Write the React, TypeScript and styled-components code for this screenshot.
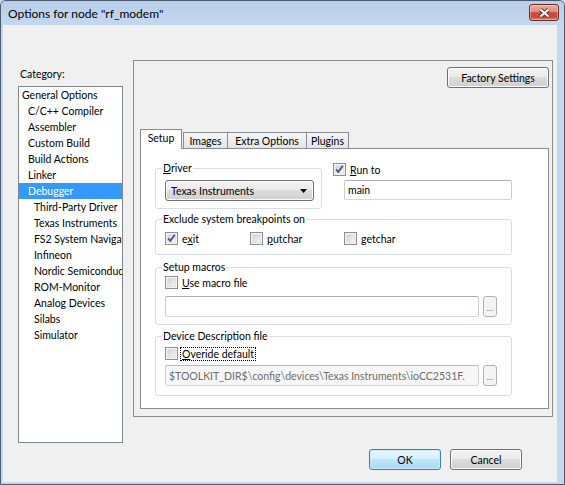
import React from "react";
import styled, { createGlobalStyle, css } from "styled-components";

const FONT = `Lato, "Noto Sans", sans-serif`;

const GlobalStyle = createGlobalStyle`
  html, body {
    margin: 0;
    padding: 0;
  }
  body {
    width: 565px;
    height: 485px;
    overflow: hidden;
    background: #c3d7ef;
    font-family: ${FONT};
    font-size: 10.5px;
    color: #000;
  }
`;

const Window = styled.div`
  box-sizing: border-box;
  width: 565px;
  height: 485px;
  display: flex;
  flex-direction: column;
  border: 1px solid #4b5a70;
  border-radius: 6px 6px 0 0;
  background: #c3d7ef;
  overflow: hidden;
`;

const TitleBar = styled.div`
  flex: none;
  height: 24px;
  display: flex;
  align-items: center;
  justify-content: space-between;
  padding: 0 5px 0 7px;
  background: linear-gradient(#b7cee9, #c4d9f0);
`;

const TitleText = styled.span`
  font-size: 12px;
  color: #000;
`;

const CloseButton = styled.div`
  box-sizing: border-box;
  width: 30px;
  height: 17px;
  margin-top: -1px;
  border: 1px solid #6a2c21;
  border-radius: 3px;
  background: linear-gradient(
    #e9ab9b 0%,
    #dd8f7e 45%,
    #c8533e 50%,
    #c44a34 78%,
    #d7836c 100%
  );
  box-shadow: inset 0 0 0 1px rgba(255, 255, 255, 0.35);
  display: flex;
  align-items: center;
  justify-content: center;
`;

const Client = styled.div`
  flex: 1;
  margin: 0 7px 2px 2px;
  background: #f0f0f0;
  display: flex;
  flex-direction: column;
`;

const Body = styled.div`
  display: flex;
  align-items: flex-start;
  gap: 10px;
  padding: 35px 0 0 15px;
`;

const LeftColumn = styled.div`
  width: 105px;
  padding-top: 6px;
  display: flex;
  flex-direction: column;
`;

const CategoryLabel = styled.div`
  line-height: 16px;
  margin-bottom: 4px;
  padding-left: 2px;
`;

const ListBox = styled.div`
  box-sizing: border-box;
  height: 357px;
  border: 1px solid #828790;
  background: #fff;
  overflow: hidden;
`;

const ListItem = styled.div<{ $level: number; $selected?: boolean }>`
  height: 16px;
  line-height: 16px;
  padding-left: ${(p) => 3 + p.$level * 6}px;
  white-space: nowrap;
  overflow: hidden;
  ${(p) =>
    p.$selected &&
    css`
      background: #3399ff;
      color: #fff;
    `}
`;

const Panel = styled.div`
  box-sizing: border-box;
  width: 420px;
  height: 357px;
  border: 1px solid #8c8c8c;
  padding: 6px 3px 7px 6px;
  display: flex;
  flex-direction: column;
`;

const PanelTop = styled.div`
  display: flex;
  justify-content: flex-end;
`;

const PushButton = styled.div<{ $w: number; $default?: boolean }>`
  box-sizing: border-box;
  width: ${(p) => p.$w}px;
  height: 21px;
  border: 1px solid #707070;
  border-radius: 3px;
  background: linear-gradient(#f2f2f2 0%, #ebebeb 45%, #dddddd 50%, #cfcfcf 100%);
  box-shadow: inset 0 0 0 1px #fcfcfc;
  display: flex;
  align-items: center;
  justify-content: center;
  ${(p) =>
    p.$default &&
    css`
      border-color: #3c7fb1;
      background: linear-gradient(#eaf6fd 0%, #d9f0fc 45%, #bee6fd 50%, #a7d9f5 100%);
      box-shadow: inset 0 0 0 1px #c9ecfc;
    `}
`;

const BrowseButton = styled.div`
  box-sizing: border-box;
  width: 14px;
  height: 21px;
  margin-left: 4px;
  border: 1px solid #adb2b5;
  border-radius: 3px;
  background: #f4f4f4;
  color: #8d8d8d;
  font-size: 10px;
  display: flex;
  align-items: center;
  justify-content: center;
`;

const TabStrip = styled.div`
  position: relative;
  z-index: 1;
  height: 20px;
  margin-top: 41px;
  margin-bottom: -1px;
  display: flex;
  align-items: flex-end;
`;

const Tab = styled.div<{ $w: number; $ml: number; $active?: boolean }>`
  box-sizing: border-box;
  width: ${(p) => p.$w}px;
  height: 16px;
  margin-left: ${(p) => p.$ml}px;
  margin-bottom: 1px;
  border: 1px solid #898c95;
  border-bottom: none;
  background: linear-gradient(#f6f6f6, #e4e4e4);
  display: flex;
  align-items: center;
  justify-content: center;
  ${(p) =>
    p.$active &&
    css`
      position: relative;
      z-index: 2;
      height: 20px;
      margin-bottom: 0;
      background: #fff;
      align-items: flex-start;
      padding-top: 2px;
    `}
`;

const TabPage = styled.div`
  flex: 1;
  border: 1px solid #898c95;
  background: #fff;
  padding: 19px 0 0 14px;
  display: flex;
  flex-direction: column;
`;

const TopRow = styled.div`
  display: flex;
  align-items: flex-start;
`;

const GroupBox = styled.div<{ $w?: number; $mt?: number; $pt: number; $pb: number; $pr?: number }>`
  position: relative;
  box-sizing: border-box;
  width: ${(p) => p.$w ?? 357}px;
  margin-top: ${(p) => p.$mt ?? 0}px;
  padding: ${(p) => p.$pt}px ${(p) => p.$pr ?? 14}px ${(p) => p.$pb}px 9px;
  border: 1px solid #d5dfe5;
  border-radius: 3px;
`;

const GroupTitle = styled.span`
  position: absolute;
  top: -8px;
  left: 6px;
  padding: 0 1px;
  line-height: 15px;
  background: #fff;
  white-space: nowrap;
`;

const Combo = styled.div`
  box-sizing: border-box;
  width: 149px;
  height: 21px;
  border: 1px solid #707070;
  border-radius: 3px;
  background: linear-gradient(#f2f2f2 0%, #ebebeb 45%, #dddddd 50%, #cfcfcf 100%);
  box-shadow: inset 0 0 0 1px #fcfcfc;
  display: flex;
  align-items: center;
  justify-content: space-between;
  padding: 0 6px 0 5px;
`;

const RunToColumn = styled.div`
  margin: -6px 0 0 11px;
  display: flex;
  flex-direction: column;
`;

const TextBox = styled.div<{ $w: number; $h: number; $disabled?: boolean }>`
  box-sizing: border-box;
  width: ${(p) => p.$w}px;
  height: ${(p) => p.$h}px;
  border: 1px solid;
  border-color: #abadb3 #c9ccd2 #d3d7dd #c9ccd2;
  border-radius: 2px;
  background: #fff;
  padding-left: 3px;
  display: flex;
  align-items: center;
  white-space: nowrap;
  overflow: hidden;
  ${(p) =>
    p.$disabled &&
    css`
      background: #f7f7f7;
      color: #6d6d6d;
      border-color: #b5b9bd #d0d0d0 #d6d6d6 #d0d0d0;
    `}
`;

const FieldRow = styled.div<{ $mt: number; $ml?: number }>`
  display: flex;
  margin-top: ${(p) => p.$mt}px;
  margin-left: ${(p) => p.$ml ?? 0}px;
`;

const CheckRow = styled.label<{ $gap?: number }>`
  display: flex;
  align-items: center;
  gap: ${(p) => p.$gap ?? 4}px;
  height: 15px;
  white-space: nowrap;
`;

const CheckGrid = styled.div`
  display: grid;
  grid-template-columns: 85px 94px auto;
`;

const FocusLabel = styled.span`
  border: 1px dotted #000;
  padding: 0 1px;
  line-height: 12px;
`;

const Footer = styled.div`
  display: flex;
  justify-content: flex-end;
  gap: 9px;
  padding: 6px 35px 0 0;
`;

const CheckBox: React.FC<{ checked?: boolean }> = ({ checked }) => (
  <svg width="13" height="13" viewBox="0 0 13 13" style={{ flex: "none" }}>
    <defs>
      <linearGradient id="cbFill" x1="0" y1="0" x2="1" y2="1">
        <stop offset="0" stopColor="#cdd0d5" />
        <stop offset="1" stopColor="#f7f7f7" />
      </linearGradient>
    </defs>
    <rect x="0.5" y="0.5" width="12" height="12" fill="#f4f4f4" stroke="#8e8f8f" />
    <rect x="2.5" y="2.5" width="8" height="8" fill="url(#cbFill)" stroke="#e2e2e2" />
    {checked && (
      <path
        d="M3.2 6.4 L5.3 9 L9.8 2.8"
        fill="none"
        stroke="#3d528f"
        strokeWidth="1.8"
        strokeLinejoin="round"
      />
    )}
  </svg>
);

const categories: { label: string; level: number }[] = [
  { label: "General Options", level: 0 },
  { label: "C/C++ Compiler", level: 1 },
  { label: "Assembler", level: 1 },
  { label: "Custom Build", level: 1 },
  { label: "Build Actions", level: 1 },
  { label: "Linker", level: 1 },
  { label: "Debugger", level: 1 },
  { label: "Third-Party Driver", level: 2 },
  { label: "Texas Instruments", level: 2 },
  { label: "FS2 System Navigator", level: 2 },
  { label: "Infineon", level: 2 },
  { label: "Nordic Semiconductor", level: 2 },
  { label: "ROM-Monitor", level: 2 },
  { label: "Analog Devices", level: 2 },
  { label: "Silabs", level: 2 },
  { label: "Simulator", level: 2 },
];

const tabs = [
  { label: "Setup", w: 42, ml: 0, active: true },
  { label: "Images", w: 45, ml: 1 },
  { label: "Extra Options", w: 80, ml: -1 },
  { label: "Plugins", w: 43, ml: -1 },
];

export default function App() {
  return (
    <>
      <GlobalStyle />
      <Window>
        <TitleBar>
          <TitleText>Options for node "rf_modem"</TitleText>
          <CloseButton>
            <svg width="13" height="10" viewBox="0 0 13 10">
              <path d="M2.5 1.5 L10.5 8.5 M10.5 1.5 L2.5 8.5" stroke="#5b2a22" strokeWidth="3.8" />
              <path d="M2.5 1.5 L10.5 8.5 M10.5 1.5 L2.5 8.5" stroke="#fff" strokeWidth="2.2" />
            </svg>
          </CloseButton>
        </TitleBar>
        <Client>
          <Body>
            <LeftColumn>
              <CategoryLabel>Category:</CategoryLabel>
              <ListBox>
                {categories.map((c) => (
                  <ListItem key={c.label} $level={c.level} $selected={c.label === "Debugger"}>
                    {c.label}
                  </ListItem>
                ))}
              </ListBox>
            </LeftColumn>
            <Panel>
              <PanelTop>
                <PushButton $w={102}>Factory Settings</PushButton>
              </PanelTop>
              <TabStrip>
                {tabs.map((t) => (
                  <Tab key={t.label} $w={t.w} $ml={t.ml} $active={t.active}>
                    {t.label}
                  </Tab>
                ))}
              </TabStrip>
              <TabPage>
                <TopRow>
                  <GroupBox $w={167} $pt={11} $pb={7} $pr={7}>
                    <GroupTitle>
                      <u>D</u>river
                    </GroupTitle>
                    <Combo>
                      <span>Texas Instruments</span>
                      <svg width="7" height="4" viewBox="0 0 7 4">
                        <path d="M0 0 H7 L3.5 4 Z" fill="#000" />
                      </svg>
                    </Combo>
                  </GroupBox>
                  <RunToColumn>
                    <CheckRow>
                      <CheckBox checked />
                      <span>
                        <u>R</u>un to
                      </span>
                    </CheckRow>
                    <FieldRow $mt={3} $ml={11}>
                      <TextBox $w={168} $h={20}>
                        main
                      </TextBox>
                    </FieldRow>
                  </RunToColumn>
                </TopRow>

                <GroupBox $mt={10} $pt={11} $pb={8}>
                  <GroupTitle>Exclude system breakpoints on</GroupTitle>
                  <CheckGrid>
                    <CheckRow>
                      <CheckBox checked />
                      <span>
                        e<u>x</u>it
                      </span>
                    </CheckRow>
                    <CheckRow>
                      <CheckBox />
                      <span>
                        <u>p</u>utchar
                      </span>
                    </CheckRow>
                    <CheckRow>
                      <CheckBox />
                      <span>
                        <u>g</u>etchar
                      </span>
                    </CheckRow>
                  </CheckGrid>
                </GroupBox>

                <GroupBox $mt={12} $pt={7} $pb={7}>
                  <GroupTitle>Setup macros</GroupTitle>
                  <CheckRow>
                    <CheckBox />
                    <span>
                      <u>U</u>se macro file
                    </span>
                  </CheckRow>
                  <FieldRow $mt={6}>
                    <TextBox $w={314} $h={21} />
                    <BrowseButton>...</BrowseButton>
                  </FieldRow>
                </GroupBox>

                <GroupBox $mt={11} $pt={9} $pb={9}>
                  <GroupTitle>Device Description file</GroupTitle>
                  <CheckRow $gap={2}>
                    <CheckBox />
                    <FocusLabel>
                      <u>O</u>veride default
                    </FocusLabel>
                  </CheckRow>
                  <FieldRow $mt={4}>
                    <TextBox $w={314} $h={21} $disabled>
                      $TOOLKIT_DIR$\config\devices\Texas Instruments\ioCC2531F.
                    </TextBox>
                    <BrowseButton>...</BrowseButton>
                  </FieldRow>
                </GroupBox>
              </TabPage>
            </Panel>
          </Body>
          <Footer>
            <PushButton $w={72} $default>
              OK
            </PushButton>
            <PushButton $w={72}>Cancel</PushButton>
          </Footer>
        </Client>
      </Window>
    </>
  );
}
